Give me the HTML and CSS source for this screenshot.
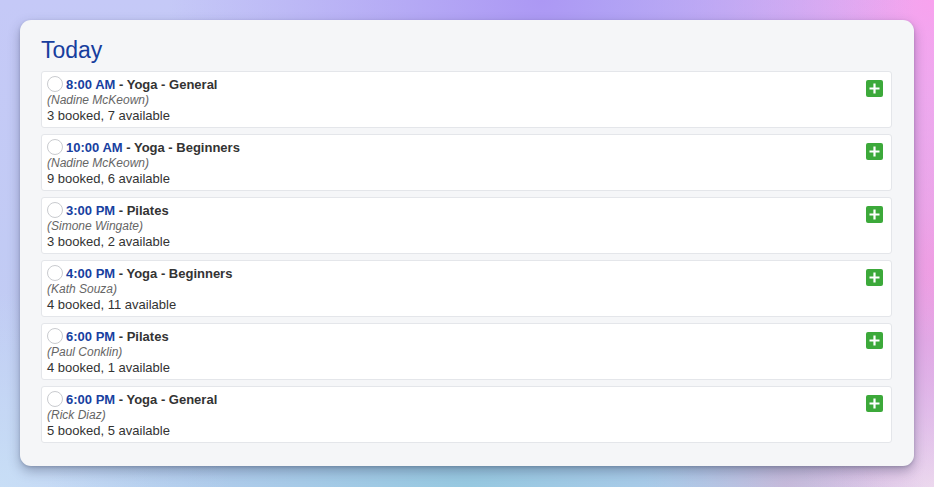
FILE: index.html
```html
<!DOCTYPE html>
<html lang="en">
<head>
<meta charset="utf-8">
<title>Today</title>
<link rel="stylesheet" href="styles.css">
</head>
<body>
<main class="card">
  <h2 class="title">Today</h2>
  <ul class="list">
    <li class="item">
      <span class="check"></span>
      <div class="info">
        <div class="name"><span class="time">8:00 AM</span> - Yoga - General</div>
        <div class="teacher">(Nadine McKeown)</div>
        <div class="count">3 booked, 7 available</div>
      </div>
      <button class="add" aria-label="Add"><svg viewBox="0 0 17 17" width="17" height="17"><path d="M8.5 3.5v10M3.5 8.5h10" stroke="#fff" stroke-width="2.2" fill="none"/></svg></button>
    </li>
    <li class="item">
      <span class="check"></span>
      <div class="info">
        <div class="name"><span class="time">10:00 AM</span> - Yoga - Beginners</div>
        <div class="teacher">(Nadine McKeown)</div>
        <div class="count">9 booked, 6 available</div>
      </div>
      <button class="add" aria-label="Add"><svg viewBox="0 0 17 17" width="17" height="17"><path d="M8.5 3.5v10M3.5 8.5h10" stroke="#fff" stroke-width="2.2" fill="none"/></svg></button>
    </li>
    <li class="item">
      <span class="check"></span>
      <div class="info">
        <div class="name"><span class="time">3:00 PM</span> - Pilates</div>
        <div class="teacher">(Simone Wingate)</div>
        <div class="count">3 booked, 2 available</div>
      </div>
      <button class="add" aria-label="Add"><svg viewBox="0 0 17 17" width="17" height="17"><path d="M8.5 3.5v10M3.5 8.5h10" stroke="#fff" stroke-width="2.2" fill="none"/></svg></button>
    </li>
    <li class="item">
      <span class="check"></span>
      <div class="info">
        <div class="name"><span class="time">4:00 PM</span> - Yoga - Beginners</div>
        <div class="teacher">(Kath Souza)</div>
        <div class="count">4 booked, 11 available</div>
      </div>
      <button class="add" aria-label="Add"><svg viewBox="0 0 17 17" width="17" height="17"><path d="M8.5 3.5v10M3.5 8.5h10" stroke="#fff" stroke-width="2.2" fill="none"/></svg></button>
    </li>
    <li class="item">
      <span class="check"></span>
      <div class="info">
        <div class="name"><span class="time">6:00 PM</span> - Pilates</div>
        <div class="teacher">(Paul Conklin)</div>
        <div class="count">4 booked, 1 available</div>
      </div>
      <button class="add" aria-label="Add"><svg viewBox="0 0 17 17" width="17" height="17"><path d="M8.5 3.5v10M3.5 8.5h10" stroke="#fff" stroke-width="2.2" fill="none"/></svg></button>
    </li>
    <li class="item">
      <span class="check"></span>
      <div class="info">
        <div class="name"><span class="time">6:00 PM</span> - Yoga - General</div>
        <div class="teacher">(Rick Diaz)</div>
        <div class="count">5 booked, 5 available</div>
      </div>
      <button class="add" aria-label="Add"><svg viewBox="0 0 17 17" width="17" height="17"><path d="M8.5 3.5v10M3.5 8.5h10" stroke="#fff" stroke-width="2.2" fill="none"/></svg></button>
    </li>
  </ul>
</main>
</body>
</html>
```
FILE: styles.css
```css
html, body {
  height: 100%;
}
body {
  margin: 0;
  padding: 20px;
  box-sizing: border-box;
  font-family: "Liberation Sans", Arial, sans-serif;
  background:
    radial-gradient(ellipse 40% 70% at 58% 0%, rgba(172,152,244,1) 0%, rgba(172,152,244,0) 100%),
    radial-gradient(ellipse 35% 70% at 100% 0%, rgba(248,162,238,1) 0%, rgba(248,162,238,0) 100%),
    radial-gradient(ellipse 20% 60% at 100% 55%, rgba(236,156,224,1) 0%, rgba(236,156,224,0) 100%),
    radial-gradient(ellipse 45% 40% at 50% 100%, rgba(150,200,224,1) 0%, rgba(150,200,224,0) 100%),
    radial-gradient(ellipse 15% 30% at 84% 100%, rgba(212,180,216,1) 0%, rgba(212,180,216,0) 100%),
    radial-gradient(ellipse 20% 30% at 100% 100%, rgba(236,236,242,1) 0%, rgba(236,236,242,0) 100%),
    radial-gradient(ellipse 25% 40% at 0% 100%, rgba(200,222,246,1) 0%, rgba(200,222,246,0) 100%),
    linear-gradient(to bottom, #c5c9f7, #bfcdf2);
}
.card {
  height: 446px;
  box-sizing: border-box;
  background: #f5f6f8;
  border-radius: 11px;
  padding: 17px 22px 23px 21px;
  box-shadow: 0 5px 12px rgba(40, 50, 80, 0.35), 0 1px 3px rgba(40, 50, 80, 0.2);
}
.title {
  margin: 0 0 8px;
  font-size: 23px;
  line-height: 26px;
  font-weight: 400;
  color: #173e9e;
}
.list {
  list-style: none;
  margin: 0;
  padding: 0;
  display: flex;
  flex-direction: column;
  gap: 6px;
}
.item {
  display: flex;
  align-items: flex-start;
  background: #fff;
  border: 1px solid #e4e6ea;
  border-radius: 3px;
  padding: 4px 8px 4px 5px;
  height: 57px;
  box-sizing: border-box;
}
.check {
  flex: none;
  width: 16px;
  height: 16px;
  box-sizing: border-box;
  border: 1px solid #c9cbcf;
  border-radius: 50%;
  background: #fff;
  margin-right: 3px;
}
.info {
  flex: 1;
  padding-top: 1px;
  color: #333;
}
.name {
  font-size: 13px;
  font-weight: 700;
  line-height: 16px;
  color: #333;
}
.time {
  color: #1740a0;
}
.teacher {
  margin-left: -19px;
  font-size: 12px;
  font-style: italic;
  line-height: 15px;
  color: #666;
}
.count {
  margin-left: -19px;
  font-size: 13px;
  line-height: 15px;
  color: #333;
}
.add {
  flex: none;
  width: 17px;
  height: 17px;
  margin-top: 4px;
  padding: 0;
  border: none;
  border-radius: 2px;
  background: #3ca93a;
  display: flex;
}
.add svg {
  display: block;
}
```
